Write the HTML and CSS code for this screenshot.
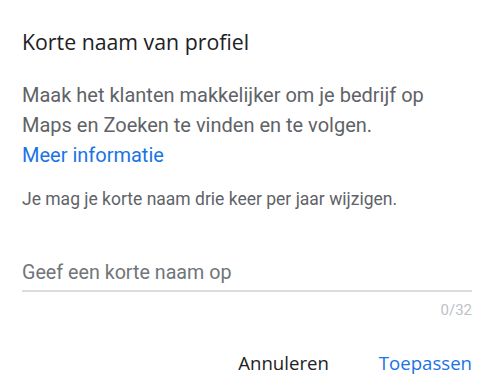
FILE: index.html
```html
<!DOCTYPE html>
<html lang="nl">
<head>
<meta charset="utf-8">
<title>Korte naam van profiel</title>
<link rel="stylesheet" href="styles.css">
</head>
<body>
<div class="dialog">
  <h1 class="title">Korte naam van profiel</h1>
  <div class="desc">
    <p class="desc-text">Maak het klanten makkelijker om je bedrijf op Maps en Zoeken te vinden en te volgen.</p>
    <a class="link" href="#">Meer informatie</a>
  </div>
  <p class="note">Je mag je korte naam drie keer per jaar wijzigen.</p>
  <div class="field">
    <div class="input">Geef een korte naam op</div>
    <div class="counter">0/32</div>
  </div>
  <div class="actions">
    <button class="btn btn-cancel">Annuleren</button>
    <button class="btn btn-apply">Toepassen</button>
  </div>
</div>
</body>
</html>
```
FILE: styles.css
```css
html, body {
  margin: 0;
  padding: 0;
  background: #ffffff;
}
body {
  font-family: Roboto, "Liberation Sans", sans-serif;
}
.dialog {
  width: 450px;
  padding: 28px 23px 0 22px;
  display: flex;
  flex-direction: column;
}
.title {
  margin: 0;
  font-family: "Open Sans", Roboto, sans-serif;
  font-weight: 400;
  font-size: 21.3px;
  line-height: 28px;
  color: #202124;
}
.desc {
  margin-top: 24px;
  display: flex;
  flex-direction: column;
  align-items: flex-start;
  font-size: 20px;
  line-height: 30px;
}
.desc-text {
  margin: 0;
  width: 430px;
  color: #5f6368;
}
.link {
  color: #1a73e8;
  text-decoration: none;
}
.note {
  margin: 16.5px 0 0 0;
  font-size: 17.5px;
  line-height: 24px;
  color: #5f6368;
}
.field {
  margin-top: 48px;
  display: flex;
  flex-direction: column;
}
.input {
  font-size: 19.7px;
  line-height: 28px;
  color: #70757a;
  padding-bottom: 3px;
  border-bottom: 2px solid #dadce0;
}
.counter {
  margin-top: 9.5px;
  align-self: flex-end;
  font-size: 15px;
  line-height: 18px;
  color: #bdc1c6;
}
.actions {
  margin-top: 32px;
  display: flex;
  justify-content: flex-end;
  gap: 50px;
}
.btn {
  border: none;
  background: none;
  padding: 0;
  font-family: "Open Sans", Roboto, sans-serif;
  font-size: 18.6px;
  font-weight: 500;
  line-height: 24px;
  cursor: pointer;
}
.btn-cancel {
  color: #202124;
}
.btn-apply {
  color: #1a73e8;
}
```
